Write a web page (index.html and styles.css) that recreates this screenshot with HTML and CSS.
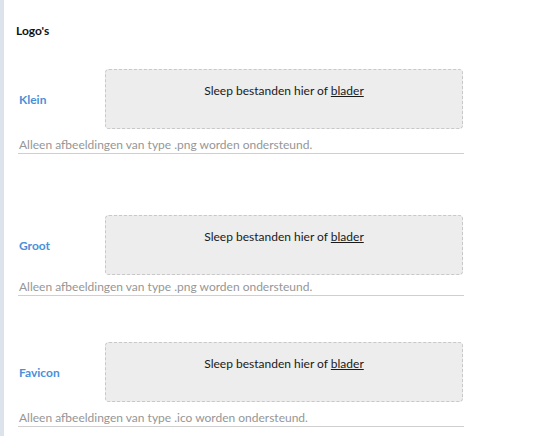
FILE: index.html
```html
<!DOCTYPE html>
<html lang="nl">
<head>
    <meta charset="UTF-8">
    <meta name="viewport" content="width=device-width, initial-scale=1.0">
    <title>Logo's</title>
    <link rel="stylesheet" href="styles.css">
</head>
<body>
    <div class="panel">
        <h3 class="section-title">Logo's</h3>

        <div class="field field-first">
            <div class="field-row">
                <label class="field-label">Klein</label>
                <div class="dropzone">Sleep bestanden hier of <a href="#">blader</a></div>
            </div>
            <p class="field-help">Alleen afbeeldingen van type .png worden ondersteund.</p>
        </div>

        <div class="field field-second">
            <div class="field-row">
                <label class="field-label">Groot</label>
                <div class="dropzone">Sleep bestanden hier of <a href="#">blader</a></div>
            </div>
            <p class="field-help">Alleen afbeeldingen van type .png worden ondersteund.</p>
        </div>

        <div class="field field-third">
            <div class="field-row">
                <label class="field-label">Favicon</label>
                <div class="dropzone">Sleep bestanden hier of <a href="#">blader</a></div>
            </div>
            <p class="field-help">Alleen afbeeldingen van type .ico worden ondersteund.</p>
        </div>
    </div>
</body>
</html>
```

FILE: styles.css
```css
body {
    margin: 0;
    font-family: Lato, "Open Sans", sans-serif;
    background: #fff;
}
.panel {
    border-left: 4px solid #dde3ea;
    min-height: 436px;
    box-sizing: border-box;
    padding: 24px 0 0 12px;
    width: 464px;
}
.section-title {
    margin: 0;
    font-size: 12px;
    font-weight: bold;
    color: #111;
    line-height: 14px;
}
.field { margin-left: 2px; }
.field-first { margin-top: 31px; }
.field-second { margin-top: 61px; }
.field-third { margin-top: 46px; }
.field-row {
    display: flex;
    align-items: center;
}
.field-label {
    width: 86px;
    padding-left: 1px;
    font-size: 12px;
    font-weight: bold;
    color: #4a90d9;
}
.dropzone {
    width: 358px;
    height: 60px;
    box-sizing: border-box;
    border: 1px dashed #c8c8c8;
    border-radius: 4px;
    background: #ededed;
    padding-top: 13px;
    text-align: center;
    font-size: 12px;
    color: #1a1a1a;
}
.dropzone a { color: #1a1a1a; text-decoration: underline; }
.field-help {
    margin: 8px 0 0;
    padding-left: 1px;
    border-bottom: 1px solid #cfcfcf;
    font-size: 12px;
    line-height: 16px;
    color: #969696;
}
.field-second .field-help { margin-top: 4px; }
```
